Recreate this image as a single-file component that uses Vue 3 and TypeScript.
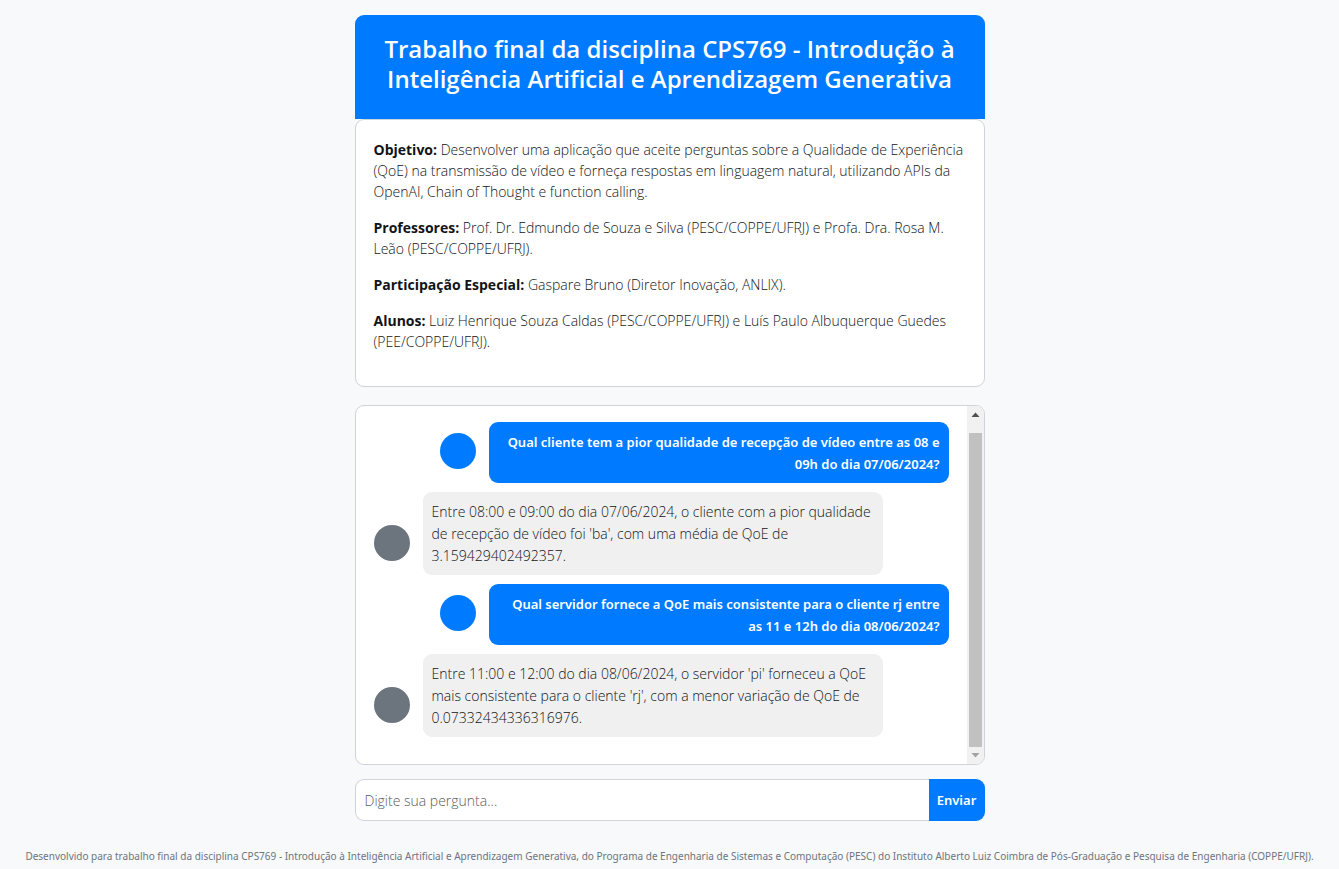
<script setup lang="ts">
import { ref } from 'vue'

interface InfoItem {
  label: string
  text: string
}

interface Message {
  id: number
  author: 'user' | 'bot'
  text: string
}

const info: InfoItem[] = [
  {
    label: 'Objetivo:',
    text: 'Desenvolver uma aplicação que aceite perguntas sobre a Qualidade de Experiência (QoE) na transmissão de vídeo e forneça respostas em linguagem natural, utilizando APIs da OpenAI, Chain of Thought e function calling.',
  },
  {
    label: 'Professores:',
    text: 'Prof. Dr. Edmundo de Souza e Silva (PESC/COPPE/UFRJ) e Profa. Dra. Rosa M. Leão (PESC/COPPE/UFRJ).',
  },
  {
    label: 'Participação Especial:',
    text: 'Gaspare Bruno (Diretor Inovação, ANLIX).',
  },
  {
    label: 'Alunos:',
    text: 'Luiz Henrique Souza Caldas (PESC/COPPE/UFRJ) e Luís Paulo Albuquerque Guedes (PEE/COPPE/UFRJ).',
  },
]

const messages = ref<Message[]>([
  { id: 1, author: 'user', text: 'Qual cliente tem a pior qualidade de recepção de vídeo entre as 08 e 09h do dia 07/06/2024?' },
  { id: 2, author: 'bot', text: "Entre 08:00 e 09:00 do dia 07/06/2024, o cliente com a pior qualidade de recepção de vídeo foi 'ba', com uma média de QoE de 3.159429402492357." },
  { id: 3, author: 'user', text: 'Qual servidor fornece a QoE mais consistente para o cliente rj entre as 11 e 12h do dia 08/06/2024?' },
  { id: 4, author: 'bot', text: "Entre 11:00 e 12:00 do dia 08/06/2024, o servidor 'pi' forneceu a QoE mais consistente para o cliente 'rj', com a menor variação de QoE de 0.07332434336316976." },
])

const question = ref('')

function send(): void {
  const text = question.value.trim()
  if (!text) return
  messages.value.push({ id: messages.value.length + 1, author: 'user', text })
  question.value = ''
}
</script>

<template>
  <div class="page">
    <main class="container">
      <header class="header">
        <h1>Trabalho final da disciplina CPS769 - Introdução à Inteligência Artificial e Aprendizagem Generativa</h1>
      </header>

      <section class="info">
        <p v-for="item in info" :key="item.label">
          <strong>{{ item.label }}</strong> {{ item.text }}
        </p>
      </section>

      <section class="chat">
        <div class="messages">
          <div v-for="m in messages" :key="m.id" class="message" :class="m.author">
            <span class="avatar"></span>
            <p class="bubble">{{ m.text }}</p>
          </div>
        </div>
        <div class="scrollbar" aria-hidden="true">
          <svg class="arrow" width="17" height="17" viewBox="0 0 17 17"><path d="M4.500 11h8L8.500 6.500z" fill="#505050" /></svg>
          <div class="track"><div class="thumb"></div></div>
          <svg class="arrow" width="17" height="17" viewBox="0 0 17 17"><path d="M4.500 6h8L8.500 10.500z" fill="#a3a3a3" /></svg>
        </div>
      </section>

      <form class="ask" @submit.prevent="send">
        <input v-model="question" type="text" placeholder="Digite sua pergunta..." aria-label="Digite sua pergunta" />
        <button type="submit">Enviar</button>
      </form>
    </main>

    <footer class="footer">
      Desenvolvido para trabalho final da disciplina CPS769 - Introdução à Inteligência Artificial e Aprendizagem Generativa, do Programa de Engenharia de Sistemas e Computação (PESC) do Instituto Alberto Luiz Coimbra de Pós-Graduação e Pesquisa de Engenharia (COPPE/UFRJ).
    </footer>
  </div>
</template>

<style>
body {
  margin: 0;
  background: #f8f9fb;
}
</style>

<style scoped>
.page {
  box-sizing: border-box;
  min-height: 100vh;
  display: flex;
  flex-direction: column;
  justify-content: space-between;
  padding-top: 15px;
  font-family: "Open Sans", "Noto Sans", sans-serif;
  font-size: 14px;
  line-height: 22px;
  font-weight: 300;
  color: #111417;
}

.container {
  width: 100%;
  max-width: 630px;
  margin: 0 auto;
}

.header {
  padding: 19px 18px 25px;
  background: #007bff;
  border-radius: 9px 9px 0 0;
  color: #fff;
  text-align: center;
}

.header h1 {
  margin: 0;
  font-size: 24px;
  line-height: 30px;
  font-weight: 600;
}

.info {
  padding: 19px 18px;
  background: #fff;
  border: 1px solid #ced4da;
  border-radius: 9px;
  line-height: 21px;
}

.info p {
  margin: 0 0 15px;
}

.info strong {
  font-weight: 700;
}

.chat {
  display: flex;
  margin-top: 18px;
  background: #fff;
  border: 1px solid #ced4da;
  border-radius: 9px;
  overflow: hidden;
}

.messages {
  flex: 1;
  padding: 16px 18px 18px;
}

.message {
  display: flex;
  align-items: flex-end;
  gap: 13px;
  margin-bottom: 9px;
}

.message.user {
  justify-content: flex-end;
}

.avatar {
  flex: none;
  width: 36px;
  height: 36px;
  margin-bottom: 14px;
  border-radius: 50%;
  background: #6c757d;
}

.user .avatar {
  background: #007bff;
}

.bubble {
  box-sizing: border-box;
  width: 80%;
  margin: 0;
  padding: 9px 9px 8px;
  border-radius: 9px;
  background: #f0f0f0;
}

.user .bubble {
  background: #007bff;
  color: #fff;
  font-family: "Noto Sans", "Open Sans", sans-serif;
  font-size: 13px;
  font-weight: 600;
  text-align: right;
}

.scrollbar {
  display: flex;
  flex-direction: column;
  width: 17px;
  background: #f1f1f1;
}

.arrow {
  display: block;
  flex: none;
}

.track {
  flex: 1;
  display: flex;
  padding: 10px 2px 0;
}

.thumb {
  flex: 1;
  background: #c1c1c1;
}

.ask {
  display: flex;
  margin-top: 14px;
}

.ask input {
  flex: 1;
  min-width: 0;
  box-sizing: border-box;
  height: 42px;
  padding: 0 9px;
  border: 1px solid #ced4da;
  border-right: 0;
  border-radius: 9px 0 0 9px;
  background: #fff;
  font: inherit;
  color: inherit;
}

.ask input::placeholder {
  color: #5c5c5c;
  opacity: 1;
}

.ask button {
  width: 56px;
  padding: 0;
  border: 0;
  border-radius: 0 9px 9px 0;
  background: #007bff;
  color: #fff;
  font-family: "Noto Sans", "Open Sans", sans-serif;
  font-size: 13px;
  font-weight: 600;
  cursor: pointer;
}

.footer {
  padding: 0 9px 2px;
  font-family: "Noto Sans", "Open Sans", sans-serif;
  font-size: 10px;
  font-weight: 400;
  color: #6c757d;
  text-align: center;
}
</style>
